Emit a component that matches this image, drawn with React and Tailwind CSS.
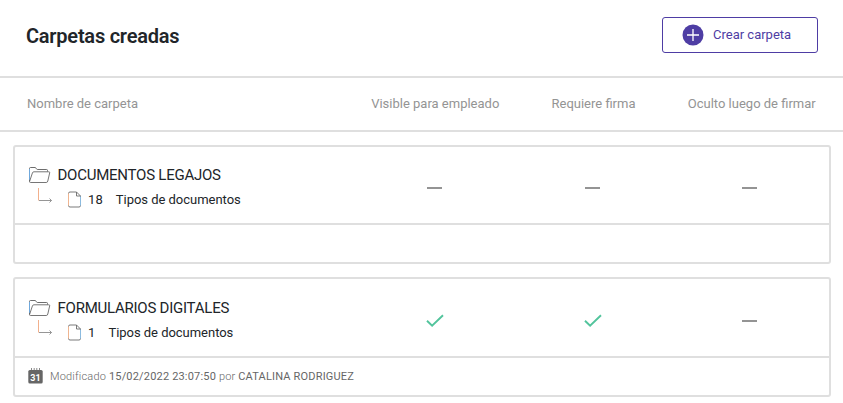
import React from 'react'

const folders = [
  { name: "DOCUMENTOS LEGAJOS", count: 18, checks: [false, false, false], modified: null },
  {
    name: "FORMULARIOS DIGITALES",
    count: 1,
    checks: [true, true, false],
    modified: { date: "15/02/2022 23:07:50", user: "CATALINA RODRIGUEZ" },
  },
]

function FolderIcon() {
  return (
    <svg width="23" height="18" viewBox="0 0 23 18" fill="none" strokeLinejoin="round" className="-mr-[1px] shrink-0">
      <path d="M19.5 5.5V4.4Q19.5 3.5 18.6 3.5H9.4Q8.8 3.5 8.3 2.6Q7.8 1.5 7 1.5H2.5Q1.5 1.5 1.5 2.5V15.5" stroke="#5c5c5c" strokeWidth="0.9" />
      <path d="M1.5 3V14" stroke="#6fa8dc" />
      <path d="M1.6 15.4L4.4 7Q4.8 5.8 5.8 5.8H20.8Q22 5.8 21.7 6.8L19.8 15Q19.5 16.5 18.2 16.5H2.5Q1.4 16.5 1.6 15.4Z" stroke="#666" strokeWidth="0.9" />
    </svg>
  )
}

function BranchIcon() {
  return (
    <svg width="16" height="16" viewBox="0 0 16 16" fill="none" className="shrink-0">
      <path d="M1.5 0V12.5" stroke="#f2b08c" />
      <path d="M2 12.5H14.5M12.5 10.5L14.5 12.5L12.5 14.5" stroke="#8a8a8a" strokeWidth="0.9" />
    </svg>
  )
}

function FileIcon() {
  return (
    <svg width="15" height="17" viewBox="0 0 15 17" fill="none" className="-mr-[1px] shrink-0">
      <path d="M9.5 1H3Q1.5 1 1.5 2.5V14.5Q1.5 16 3 16H12Q13.5 16 13.5 14.5V5L9.5 1V5H13.5" stroke="#6b6b6b" strokeWidth="0.9" />
      <path d="M1.5 14.5V2.5" stroke="#f0b590" />
      <path d="M13.5 5.5V14.5" stroke="#8bbbe0" />
    </svg>
  )
}

function CalendarIcon() {
  return (
    <svg width="15" height="16" viewBox="0 0 15 16" className="-mt-[1px] shrink-0">
      <path d="M3.5 0V4M6.2 0V4M8.8 0V4M11.5 0V4" stroke="#8a8a8a" strokeWidth="1" />
      <rect x="0.3" y="2" width="14.4" height="13.6" rx="1.6" fill="#666" />
      <text x="7.5" y="12.6" textAnchor="middle" fill="#fff" fontSize="9" fontWeight="700">31</text>
    </svg>
  )
}

function Mark({ on }) {
  return (
    <div className="flex justify-center pt-[6px]">
      {on ? (
        <svg width="18" height="14" viewBox="0 0 18 14" fill="none">
          <path d="M1 6.8L6.1 11.8L17 1.3" stroke="#52c49c" strokeWidth="1.9" />
        </svg>
      ) : (
        <span className="mr-[1px] h-[2px] w-[15px] bg-[#949494]"></span>
      )}
    </div>
  )
}

function FolderCard({ name, count, checks, modified }) {
  return (
    <div className="rounded-[3px] border-2 border-[#dfdfdf]">
      <div className={`grid grid-cols-[341px_158px_158px_156px] items-center border-b-2 border-[#dfdfdf] ${modified ? "h-[79px]" : "h-[78px]"}`}>
        <div className="pl-[13px]">
          <div className="mt-[7.25px] flex h-[22px] items-center">
            <FolderIcon />
            <span className="ml-[7.5px] text-[15px] tracking-[-0.24px] text-[#212529]">{name}</span>
          </div>
          <div className="mt-[0.5px] flex h-[26px] items-center pl-[9px] text-[13px] text-[#212529]">
            <div className="-mt-[8px]">
              <BranchIcon />
            </div>
            <div className="ml-[14px]">
              <FileIcon />
            </div>
            <span className="ml-[7px] tracking-[0.1px]">{count}</span>
            <span className="ml-[13px] tracking-[-0.03px]">Tipos de documentos</span>
          </div>
        </div>
        {checks.map((on, i) => (
          <Mark key={i} on={on} />
        ))}
      </div>
      <div className="flex h-[37px] items-center pl-[13px] text-[11px] text-[#666]">
        {modified && (
          <>
            <CalendarIcon />
            <p className="ml-[7px] pt-[1px] font-light tracking-[0.18px]">
              Modificado <span className="font-normal">{modified.date}</span> por{" "}
              <span className="font-normal">{modified.user}</span>
            </p>
          </>
        )}
      </div>
    </div>
  )
}

export default function App() {
  return (
    <div className="h-[403px] w-[843px] overflow-hidden bg-white font-[Roboto,sans-serif]">
      <header className="flex h-[78px] items-start justify-between border-b-2 border-[#dfdfdf] pt-[17px] pr-[25px] pl-[26px]">
        <h1 className="text-[20px] leading-[38px] font-semibold tracking-[-0.23px] text-[#212529]">Carpetas creadas</h1>
        <button className="flex h-9 w-[156px] items-center rounded-[3px] border border-[#4e3da4] pl-[19px] text-[13px] text-[#4e3da4]">
          <svg width="22" height="22" viewBox="0 0 22 22">
            <circle cx="11" cy="11" r="10.5" fill="#4e3da4" />
            <path d="M11 5V17M5 11H17" stroke="#fff" strokeWidth="1.3" />
          </svg>
          <span className="ml-[9px]">Crear carpeta</span>
        </button>
      </header>
      <div className="grid h-[54px] grid-cols-[329px_158.5px_158px_158.5px] items-center border-b-2 border-[#dfdfdf] pl-[27px] text-[13px] text-[#949494]">
        <span>Nombre de carpeta</span>
        <span className="text-center">Visible para empleado</span>
        <span className="text-center">Requiere firma</span>
        <span className="text-center">Oculto luego de firmar</span>
      </div>
      <main className="flex flex-col gap-[13px] py-[13px] pr-[12px] pl-[13px]">
        {folders.map((folder) => (
          <FolderCard key={folder.name} {...folder} />
        ))}
      </main>
    </div>
  )
}
